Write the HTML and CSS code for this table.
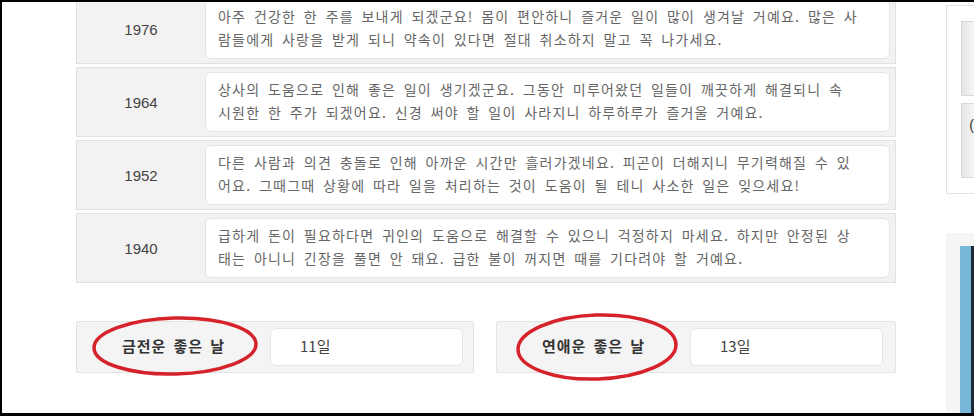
FILE: index.html
```html
<!DOCTYPE html>
<html lang="ko">
<head>
<meta charset="utf-8">
<title>띠별 운세</title>
<link rel="stylesheet" href="styles.css">
</head>
<body>
<div class="screen">
  <div class="main">
    <div class="table">
      <div class="row">
        <div class="year">1976</div>
        <div class="desc"><p>아주 건강한 한 주를 보내게 되겠군요! 몸이 편안하니 즐거운 일이 많이 생겨날 거예요. 많은 사<br>람들에게 사랑을 받게 되니 약속이 있다면 절대 취소하지 말고 꼭 나가세요.</p></div>
      </div>
      <div class="row">
        <div class="year">1964</div>
        <div class="desc"><p>상사의 도움으로 인해 좋은 일이 생기겠군요. 그동안 미루어왔던 일들이 깨끗하게 해결되니 속<br>시원한 한 주가 되겠어요. 신경 써야 할 일이 사라지니 하루하루가 즐거울 거예요.</p></div>
      </div>
      <div class="row">
        <div class="year">1952</div>
        <div class="desc"><p>다른 사람과 의견 충돌로 인해 아까운 시간만 흘러가겠네요. 피곤이 더해지니 무기력해질 수 있<br>어요. 그때그때 상황에 따라 일을 처리하는 것이 도움이 될 테니 사소한 일은 잊으세요!</p></div>
      </div>
      <div class="row">
        <div class="year">1940</div>
        <div class="desc"><p>급하게 돈이 필요하다면 귀인의 도움으로 해결할 수 있으니 걱정하지 마세요. 하지만 안정된 상<br>태는 아니니 긴장을 풀면 안 돼요. 급한 불이 꺼지면 때를 기다려야 할 거예요.</p></div>
      </div>
    </div>
    <div class="cards">
      <div class="card card-money">
        <div class="label">금전운 좋은 날
          <svg class="circle" viewBox="0 0 166 60" width="166" height="60"><ellipse cx="83" cy="30" rx="81" ry="28" fill="none" stroke="#d6222a" stroke-width="3.5" transform="rotate(-1.5 83 30)"/></svg>
        </div>
        <div class="value">11일</div>
      </div>
      <div class="card card-love">
        <div class="label">연애운 좋은 날
          <svg class="circle" viewBox="0 0 162 68" width="162" height="68"><ellipse cx="81" cy="34" rx="79" ry="32" fill="none" stroke="#d6222a" stroke-width="3.5" transform="rotate(-2 81 34)"/></svg>
        </div>
        <div class="value">13일</div>
      </div>
    </div>
  </div>
  <div class="side">
    <div class="side-top">
      <div class="thumb"></div>
      <div class="thumb"><span class="peek">(</span></div>
    </div>
    <div class="side-bottom">
      <div class="bar"></div>
    </div>
  </div>
</div>
</body>
</html>
```
FILE: styles.css
```css
html, body {
  margin: 0;
  padding: 0;
  background: #000;
}

.screen {
  display: flex;
  width: 974px;
  height: 416px;
  box-sizing: border-box;
  border-top: 2px solid #000;
  border-left: 2px solid #000;
  border-bottom: 3px solid #000;
  background: #fff;
  overflow: hidden;
  font-family: "Noto Sans CJK KR", sans-serif;
}

.main {
  width: 820px;
  margin-left: 74px;
  flex: none;
}

.table {
  margin-top: -8px;
  display: flex;
  flex-direction: column;
  gap: 3px;
}

.row {
  display: flex;
  height: 70px;
  box-sizing: border-box;
  border: 1px solid #e1e1e1;
  background: #f3f2f3;
  padding: 4px 5px 4px 0;
}

.year {
  width: 128px;
  flex: none;
  display: flex;
  align-items: center;
  justify-content: center;
  font-family: "Liberation Sans", Arial, sans-serif;
  font-size: 15px;
  color: #444;
}

.desc {
  flex: 1;
  display: flex;
  align-items: center;
  background: #fff;
  border: 1px solid #e4e4e4;
  border-radius: 6px;
  padding: 0 10px 2px 12px;
}

.desc p {
  margin: 0;
  font-size: 14px;
  line-height: 23px;
  color: #666;
  white-space: nowrap;
  word-spacing: 2.6px;
  letter-spacing: 1.2px;
}

.cards {
  display: flex;
  gap: 22px;
  margin-top: 38px;
}

.card {
  display: flex;
  align-items: center;
  height: 52px;
  box-sizing: border-box;
  border: 1px solid #e3e3e3;
  background: #f4f4f4;
  border-radius: 2px;
}

.card-money { width: 398px; }
.card-love { width: 400px; }

.label {
  position: relative;
  width: 193px;
  flex: none;
  text-align: center;
  font-size: 15px;
  font-weight: bold;
  color: #333;
  word-spacing: 2px;
  letter-spacing: 1px;
  padding-bottom: 4px;
}

.circle {
  position: absolute;
  display: block;
}

.card-money .circle { left: 15px; top: -19px; }
.card-love .circle { left: 19px; top: -22px; }

.value {
  width: 193px;
  height: 38px;
  box-sizing: border-box;
  background: #fff;
  border: 1px solid #e6e6e6;
  border-radius: 6px;
  padding-left: 29px;
  line-height: 34px;
  font-size: 15px;
  color: #444;
}

.side {
  margin-left: 50px;
  width: 28px;
  flex: none;
  display: flex;
  flex-direction: column;
}

.side-top {
  margin-top: 3px;
  height: 189px;
  box-sizing: border-box;
  border: 1px solid #e3e3e3;
  border-right: none;
  padding: 15px 0 0 14px;
  display: flex;
  flex-direction: column;
  gap: 7px;
}

.thumb {
  height: 75px;
  box-sizing: border-box;
  border: 1px solid #d9d9d9;
  border-right: none;
  background: linear-gradient(to right, #e4e4e4, #f6f6f6);
  position: relative;
}

.peek {
  position: absolute;
  right: 0;
  top: 13px;
  font-family: "Liberation Sans", sans-serif;
  font-size: 14px;
  color: #333;
}

.side-bottom {
  margin-top: 39px;
  flex: 1;
  background: #f5f5f5;
  padding: 13px 0 0 14px;
  display: flex;
}

.bar {
  flex: 1;
  background: #79b7d9;
  border-right: 3px solid #1c2834;
}
```
